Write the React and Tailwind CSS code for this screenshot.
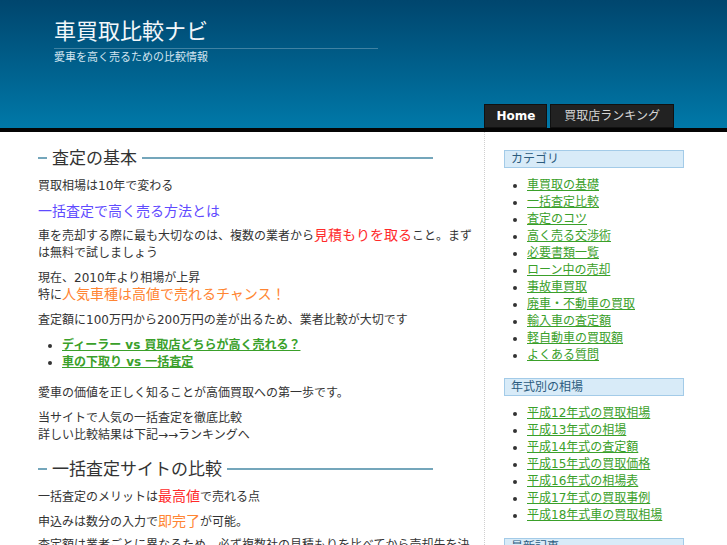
import React from "react";

const font = { fontFamily: '"DejaVu Sans", "Noto Sans CJK JP", sans-serif' };

function Heading({ children, className = "" }) {
  return (
    <div className={"flex w-[395px] items-center gap-[5px] " + className}>
      <span className="h-[2px] w-[9px] bg-[#74a6bb]" />
      <h2 className="text-[17px] leading-[20px] text-[#333]">{children}</h2>
      <span className="h-[2px] flex-1 bg-[#74a6bb]" />
    </div>
  );
}

function Widget({ title, items, className = "" }) {
  return (
    <div className={className}>
      <h3 className="border border-[#a3cbe8] bg-[#d8ebf8] px-[6px] text-[12px] leading-[16px] text-[#2c5c7e]">
        {title}
      </h3>
      <ul className="mt-[9px] list-disc pl-[23px] text-[12px] leading-[17px]">
        {items.map((item) => (
          <li key={item}>
            <a href="#" className="text-[#3aa02a] underline">
              {item}
            </a>
          </li>
        ))}
      </ul>
    </div>
  );
}

const categories = [
  "車買取の基礎",
  "一括査定比較",
  "査定のコツ",
  "高く売る交渉術",
  "必要書類一覧",
  "ローン中の売却",
  "事故車買取",
  "廃車・不動車の買取",
  "輸入車の査定額",
  "軽自動車の買取額",
  "よくある質問",
];

const years = [
  "平成12年式の買取相場",
  "平成13年式の相場",
  "平成14年式の査定額",
  "平成15年式の買取価格",
  "平成16年式の相場表",
  "平成17年式の買取事例",
  "平成18年式車の買取相場",
];

export default function App() {
  return (
    <div className="h-[545px] overflow-hidden bg-white text-[#333]" style={font}>
      {/* header */}
      <header className="flex h-[128px] flex-col justify-between bg-linear-to-b from-[#00466e] to-[#0079a9]">
        <div className="pl-[54px] pt-[18px]">
          <div className="w-[324px] border-b border-[#ffffff40] pb-[2px]">
            <h1 className="text-[22px] leading-[28px] text-[#f2f7fa]">車買取比較ナビ</h1>
          </div>
          <p className="mt-[2px] text-[11px] leading-[14px] text-[#d2e5f0]">
            愛車を高く売るための比較情報
          </p>
        </div>
        <nav className="flex justify-end gap-[3px] pr-[53px]">
          <a href="#" className="flex h-[24px] items-center border border-[#111] bg-[#222] px-[11px] text-[12px] font-bold text-white">
            Home
          </a>
          <a href="#" className="flex h-[24px] items-center border border-[#111] bg-[#222] px-[13px] text-[12px] text-[#d6d6d6]">
            買取店ランキング
          </a>
        </nav>
      </header>
      <div className="h-[4px] bg-[#050505]" />

      <div className="flex">
        {/* main column */}
        <main className="ml-[38px] w-[436px] pt-[16px] text-[12px] leading-[17px]">
          <Heading className="mb-[10px]">査定の基本</Heading>
          <p className="mb-[8px]">買取相場は10年で変わる</p>
          <p className="mb-[8px] text-[14px] text-[#5f4bff]">一括査定で高く売る方法とは</p>
          <p className="mb-[8px]">
            車を売却する際に最も大切なのは、複数の業者から
            <span className="text-[14px] leading-[14px] text-[#ff2a2a]">見積もりを取る</span>
            こと。まずは無料で試しましょう
          </p>
          <p className="mb-[8px]">
            現在、2010年より相場が上昇
            <br />
            特に<span className="text-[14px] leading-[14px] text-[#ff8533]">人気車種は高値で売れるチャンス！</span>
          </p>
          <p className="mb-[8px]">査定額に100万円から200万円の差が出るため、業者比較が大切です</p>
          <ul className="mb-[14px] list-disc pl-[24px]">
            <li>
              <a href="#" className="font-bold text-[#3aa02a] underline">
                ディーラー vs 買取店どちらが高く売れる？
              </a>
            </li>
            <li>
              <a href="#" className="font-bold text-[#3aa02a] underline">
                車の下取り vs 一括査定
              </a>
            </li>
          </ul>
          <p className="mb-[8px]">愛車の価値を正しく知ることが高価買取への第一歩です。</p>
          <p className="mb-[8px]">
            当サイトで人気の一括査定を徹底比較
            <br />
            詳しい比較結果は下記→→ランキングへ
          </p>
          <Heading className="mb-[10px] mt-[15px]">一括査定サイトの比較</Heading>
          <p className="mb-[8px]">
            一括査定のメリットは<span className="text-[14px] leading-[14px] text-[#ff2a2a]">最高値</span>で売れる点
          </p>
          <p className="mb-[6px]">
            申込みは数分の入力で<span className="text-[14px] leading-[14px] text-[#ff8533]">即完了</span>が可能。
          </p>
          <p className="mb-[8px]">
            査定額は業者ごとに異なるため、必ず複数社の見積もりを比べてから売却先を決めましょう。実際に査定を受けた方の口コミも参考にしてください。
          </p>
        </main>

        {/* sidebar */}
        <aside className="ml-[10px] border-l border-dotted border-[#cfcfcf] pl-[19px] pt-[18px]">
          <div className="w-[180px]">
            <Widget title="カテゴリ" items={categories} className="mb-[14px]" />
            <Widget title="年式別の相場" items={years} className="mb-[14px]" />
            <h3 className="border border-[#a3cbe8] bg-[#d8ebf8] px-[6px] text-[12px] leading-[16px] text-[#2c5c7e]">
              最新記事
            </h3>
          </div>
        </aside>
      </div>
    </div>
  );
}
